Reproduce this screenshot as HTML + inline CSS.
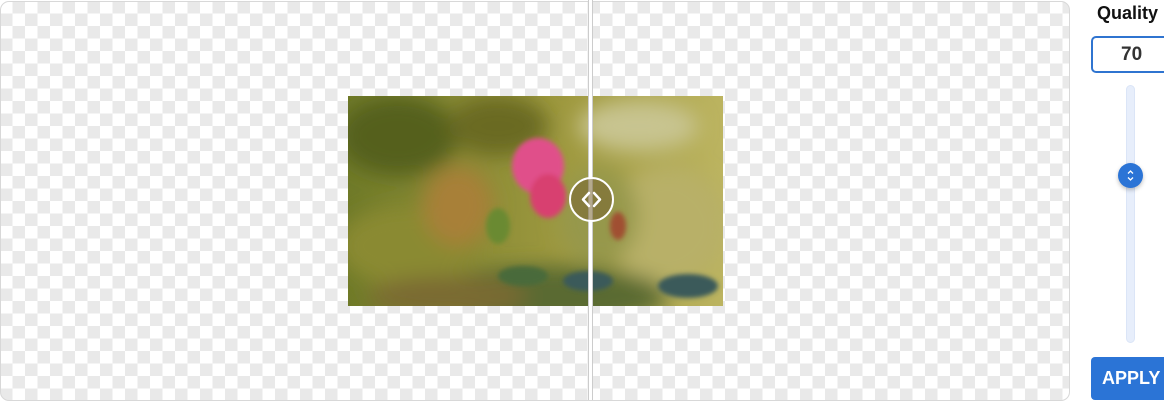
<!DOCTYPE html>
<html><head><meta charset="utf-8"><style>
html,body{margin:0;padding:0;width:1164px;height:419px;overflow:hidden;background:#fff;font-family:"Liberation Sans",Arial,sans-serif;}
.box{position:absolute;left:0;top:1px;width:1068px;height:398px;border:1px solid #d8d8d8;border-radius:9px;overflow:hidden;
background-color:#fff;
background-image:linear-gradient(45deg,#e9e9e9 25%,transparent 25%,transparent 75%,#e9e9e9 75%),linear-gradient(45deg,#e9e9e9 25%,transparent 25%,transparent 75%,#e9e9e9 75%);
background-size:25px 25px;background-position:-1px -1px,11.5px 11.5px;}
.img{position:absolute;left:348px;top:96px;width:375px;height:210px;}
.div{position:absolute;left:588px;top:0;width:5px;height:400px;background:#fff;border-left:1px solid #ccc;border-right:1px solid #ccc;box-sizing:border-box;}
.handle{position:absolute;left:569px;top:177px;width:41px;height:41px;border:2px solid #fff;border-radius:50%;background:rgba(120,100,50,.55);}
.q{position:absolute;left:1097px;top:3px;font-weight:bold;font-size:18px;color:#111;}
.inp{position:absolute;left:1091px;top:36px;width:80px;height:33px;border:2px solid #2f74d0;border-radius:5px;box-sizing:content-box;}
.inp span{position:absolute;left:28px;top:6px;font-weight:bold;font-size:19px;color:#333;}
.track{position:absolute;left:1126px;top:85px;width:9px;height:258px;background:#e7eefb;border-radius:5px;border:1px solid #dbe5f7;box-sizing:border-box;}
.thumb{position:absolute;left:1118px;top:163px;width:25px;height:25px;border-radius:50%;background:#2b74d6;box-shadow:0 2px 4px rgba(0,0,0,.25);}
.btn{position:absolute;left:1091px;top:357px;width:90px;height:43px;background:#2b74d6;border-radius:4px;color:#fff;font-weight:bold;font-size:18px;}
.btn span{position:absolute;left:11px;top:11px;}
</style></head><body>
<div class="box"></div>
<svg class="img" viewBox="0 0 375 210" preserveAspectRatio="none">
<defs>
<filter id="b" x="-20%" y="-20%" width="140%" height="140%"><feGaussianBlur stdDeviation="10"/></filter>
<filter id="s"><feGaussianBlur stdDeviation="2.5"/></filter>
<linearGradient id="g" x1="0" y1="0" x2="1" y2="0"><stop offset="0" stop-color="#6f7a28"/><stop offset=".6" stop-color="#a09a40"/><stop offset="1" stop-color="#bcb460"/></linearGradient>
<clipPath id="c"><rect width="375" height="210"/></clipPath>
</defs>
<g clip-path="url(#c)">
<rect width="375" height="210" fill="url(#g)"/>
<g filter="url(#b)">
<ellipse cx="50" cy="40" rx="60" ry="40" fill="#55601e"/>
<ellipse cx="150" cy="30" rx="50" ry="30" fill="#6a6a22"/>
<ellipse cx="60" cy="150" rx="70" ry="40" fill="#8a8a30"/>
<ellipse cx="290" cy="30" rx="60" ry="25" fill="#c8c490"/>
<ellipse cx="320" cy="130" rx="60" ry="60" fill="#b8b068"/>
<ellipse cx="110" cy="110" rx="35" ry="40" fill="#a88038"/>
<ellipse cx="250" cy="120" rx="40" ry="50" fill="#96984c"/>
<ellipse cx="200" cy="200" rx="120" ry="30" fill="#5a6a30"/>
<ellipse cx="100" cy="200" rx="80" ry="20" fill="#7a6a30"/>
</g>
<g filter="url(#s)">
<ellipse cx="190" cy="70" rx="26" ry="28" fill="#e0508a"/>
<ellipse cx="200" cy="100" rx="18" ry="22" fill="#d84070"/>
<ellipse cx="150" cy="130" rx="12" ry="18" fill="#6a8a30"/>
<ellipse cx="175" cy="180" rx="25" ry="10" fill="#4a6a3a"/>
<ellipse cx="240" cy="185" rx="25" ry="10" fill="#3a5a5a"/>
<ellipse cx="340" cy="190" rx="30" ry="12" fill="#3a5a5a"/>
<ellipse cx="270" cy="130" rx="8" ry="14" fill="#a05030"/>
</g>
</g>
</svg>
<div class="div"></div>
<div class="handle"><svg width="41" height="41" viewBox="0 0 41 41"><path d="M18 14 L12 20.5 L18 27 M23 14 L29 20.5 L23 27" stroke="#fff" stroke-width="2.5" fill="none" stroke-linecap="round" stroke-linejoin="round"/></svg></div>
<div class="q">Quality</div>
<div class="inp"><span>70</span></div>
<div class="track"></div>
<div class="thumb"><svg width="25" height="25" viewBox="0 0 25 25"><path d="M10 10.5 L12.5 8 L15 10.5 M10 14.5 L12.5 17 L15 14.5" stroke="#fff" stroke-width="1.3" fill="none"/></svg></div>
<div class="btn"><span>APPLY</span></div>
</body></html>
